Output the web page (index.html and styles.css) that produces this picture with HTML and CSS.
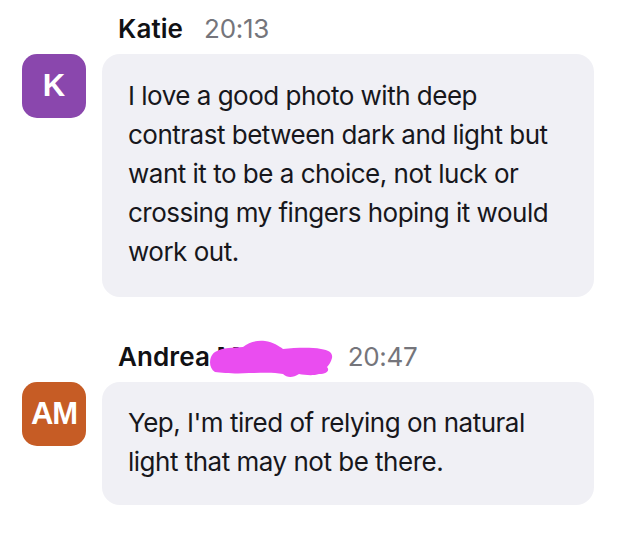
FILE: index.html
```html
<!DOCTYPE html>
<html>
<head>
<meta charset="utf-8">
<link rel="stylesheet" href="styles.css">
</head>
<body>
<div class="chat">
  <div class="group">
    <div class="header">
      <span class="name">Katie</span>
      <span class="time">20:13</span>
    </div>
    <div class="row">
      <div class="avatar purple">K</div>
      <div class="bubble first">I love a good photo with deep contrast between dark and light but want it to be a choice, not luck or crossing my fingers hoping it would work out.</div>
    </div>
  </div>
  <div class="group second">
    <div class="header">
      <span class="name redacted">Andrea M<span class="spacer"></span>
        <svg class="scribble" width="126" height="40" viewBox="0 0 126 40"><path d="M6 12 C14 7 24 8 34 7 C40 2 48 0 56 1 C64 2 70 6 74 9 C86 8 100 7 112 9 C120 10 124 13 123 18 C122 22 120 25 118 27 C121 30 118 34 110 34 C104 36 96 35 90 34 C84 38 78 38 74 34 C64 32 52 33 40 33 C28 34 14 33 6 32 C1 29 0 22 2 17 C3 15 4 13 6 12 Z" fill="#ea4df0"/></svg>
      </span>
      <span class="time">20:47</span>
    </div>
    <div class="row">
      <div class="avatar orange">AM</div>
      <div class="bubble">Yep, I'm tired of relying on natural light that may not be there.</div>
    </div>
  </div>
</div>
</body>
</html>
```

FILE: styles.css
```css
html, body {
  margin: 0;
  padding: 0;
  background: #ffffff;
}
body {
  font-family: Inter, "Liberation Sans", Arial, sans-serif;
  color: #17171c;
}
.chat {
  padding: 12px 36px 0 22px;
  display: flex;
  flex-direction: column;
  gap: 43px;
}
.header {
  padding-left: 96px;
  height: 36px;
  line-height: 34px;
  margin-bottom: 6px;
  display: flex;
  align-items: baseline;
  gap: 21px;
  font-size: 26px;
}
.name {
  font-weight: 600;
  color: #111114;
  letter-spacing: 0.1px;
}
.time {
  color: #75757b;
  font-weight: 400;
  letter-spacing: -0.3px;
}
.redacted {
  position: relative;
}
.spacer {
  display: inline-block;
  width: 86px;
  height: 1px;
}
.scribble {
  position: absolute;
  left: 91px;
  top: 0px;
}
.row {
  display: flex;
  gap: 16px;
  align-items: flex-start;
}
.avatar {
  width: 64px;
  height: 64px;
  flex: none;
  border-radius: 15px;
  color: #ffffff;
  font-family: "Liberation Sans", Arial, sans-serif;
  font-weight: 700;
  font-size: 31px;
  display: flex;
  align-items: center;
  justify-content: center;
}
.purple { background: #8a47ad; }
.orange { background: #c65c25; letter-spacing: -1px; }
.bubble {
  flex: 1;
  background: #f0f0f5;
  border-radius: 18px;
  padding: 22px 26px 26px;
  font-size: 26px;
  line-height: 39px;
  letter-spacing: -0.5px;
}
.second .bubble {
  padding: 21px 26px 24px;
}
```
